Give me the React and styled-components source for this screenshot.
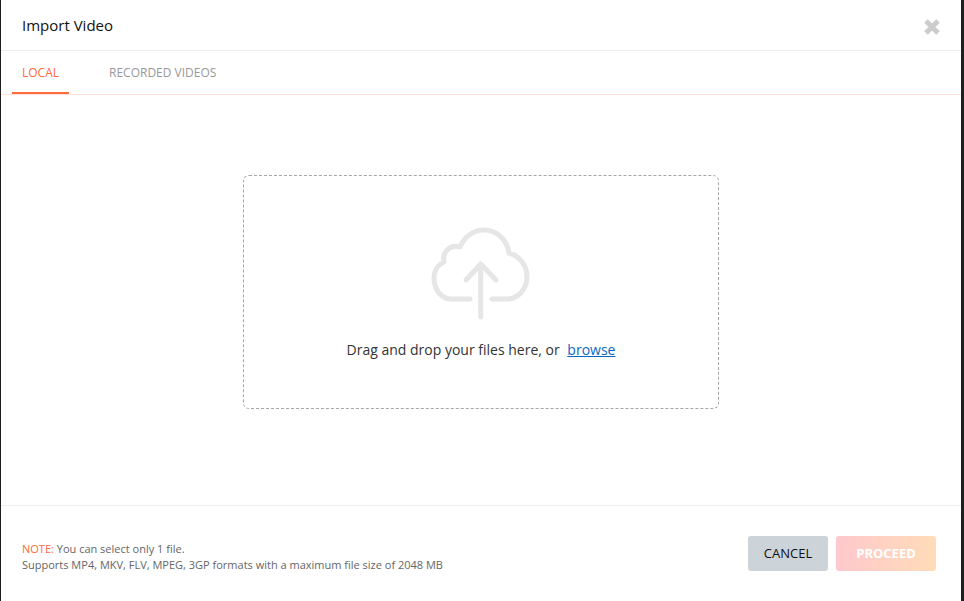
import React, { useState } from "react";
import styled, { createGlobalStyle } from "styled-components";

const GlobalStyle = createGlobalStyle`
  html, body {
    margin: 0;
    padding: 0;
    height: 100%;
    background: #1f1f1f;
    overflow: hidden;
    font-family: "Open Sans", "Noto Sans", sans-serif;
  }
  * { box-sizing: border-box; }
`;

const Page = styled.div`
  width: 964px;
  height: 601px;
  padding: 0 3px 0 1px;
  display: flex;
`;

const Modal = styled.div`
  flex: 1;
  background: #fff;
  display: flex;
  flex-direction: column;
`;

const Header = styled.div`
  height: 51px;
  flex: none;
  display: flex;
  align-items: center;
  justify-content: space-between;
  padding: 0 21px;
  border-bottom: 1px solid #eeeeee;
`;

const Title = styled.h1`
  margin: 0;
  font-size: 15px;
  font-weight: 400;
  color: #111;
`;

const CloseButton = styled.button`
  padding: 0;
  border: 0;
  background: none;
  width: 16px;
  height: 16px;
  margin-top: 3px;
  cursor: pointer;
  display: block;
  svg { display: block; }
`;

const Tabs = styled.div`
  height: 44px;
  flex: none;
  display: flex;
  gap: 30px;
  padding-left: 11px;
  border-bottom: 1px solid #ffe1da;
`;

const Tab = styled.div`
  height: 43px;
  padding: 2px 10px 0;
  display: flex;
  align-items: center;
  font-size: 12px;
  color: ${(props) => (props.active ? "#ff6b3d" : "#999999")};
  border-bottom: 2px solid ${(props) => (props.active ? "#ff6b3d" : "transparent")};
  cursor: pointer;
`;

const Body = styled.div`
  flex: 1;
  display: flex;
  justify-content: center;
  padding-top: 80px;
`;

const DropZone = styled.div`
  width: 476px;
  height: 234px;
  border: 1px dashed #a6a6a6;
  border-radius: 6px;
  display: flex;
  flex-direction: column;
  align-items: center;
  padding-top: 51px;
`;

const DropText = styled.p`
  margin: 19px 0 0;
  font-size: 14px;
  line-height: 19px;
  color: #333;
`;

const BrowseLink = styled.a`
  margin-left: 4px;
  color: #0a66c2;
  text-decoration: underline;
  cursor: pointer;
`;

const Footer = styled.div`
  height: 96px;
  flex: none;
  display: flex;
  align-items: center;
  justify-content: space-between;
  padding: 0 25px 0 21px;
  border-top: 1px solid #eeeeee;
`;

const Note = styled.div`
  font-size: 11px;
  line-height: 16px;
  color: #666;
  margin-top: 7px;
`;

const NoteLabel = styled.span`
  color: #ff6b3d;
`;

const Actions = styled.div`
  display: flex;
  gap: 8px;
`;

const Button = styled.button`
  height: 35px;
  width: ${(props) => (props.primary ? "100px" : "80px")};
  padding: 0 0 2px;
  border: 0;
  border-radius: 3px;
  font-family: inherit;
  font-size: 13px;
  font-weight: ${(props) => (props.primary ? 700 : 400)};
  color: ${(props) => (props.primary ? "#fff" : "#111")};
  background: ${(props) =>
    props.primary ? "linear-gradient(90deg, #ffc8cd, #ffdcb8)" : "#ccd4da"};
  cursor: ${(props) => (props.primary ? "not-allowed" : "pointer")};
`;

const CloseIcon = () => (
  <svg width="16" height="16" viewBox="0 0 16 16" fill="none">
    <path d="M2 2 L14 14 M14 2 L2 14" stroke="#cccccc" strokeWidth="5" />
  </svg>
);

const CloudIcon = () => (
  <svg width="100" height="94" viewBox="0 0 100 94" fill="none" stroke="#e6e6e6" strokeWidth="5" strokeLinecap="round" strokeLinejoin="round">
    <path d="M39 72 H20 C10 72 3 62 3 51 C3 44 7 38 13 35 C11 25 19 17 29 20 C34 9 43 3 53 3 C66 3 76 13 78 26 C89 29 96 39 96 50 C96 62 87 72 76 72 H61" />
    <path d="M49.7 90 V37 M35 53 L49.7 37 L65 53" />
  </svg>
);

const App = () => {
  const [tab, setTab] = useState("local");

  return (
    <Page>
      <GlobalStyle />
      <Modal>
        <Header>
          <Title>Import Video</Title>
          <CloseButton aria-label="Close">
            <CloseIcon />
          </CloseButton>
        </Header>
        <Tabs>
          <Tab active={tab === "local"} onClick={() => setTab("local")}>LOCAL</Tab>
          <Tab active={tab === "recorded"} onClick={() => setTab("recorded")}>RECORDED VIDEOS</Tab>
        </Tabs>
        <Body>
          <DropZone>
            <CloudIcon />
            <DropText>
              Drag and drop your files here, or <BrowseLink>browse</BrowseLink>
            </DropText>
          </DropZone>
        </Body>
        <Footer>
          <Note>
            <NoteLabel>NOTE:</NoteLabel> You can select only 1 file.
            <br />
            Supports MP4, MKV, FLV, MPEG, 3GP formats with a maximum file size of 2048 MB
          </Note>
          <Actions>
            <Button>CANCEL</Button>
            <Button primary>PROCEED</Button>
          </Actions>
        </Footer>
      </Modal>
    </Page>
  );
};

export default App;
